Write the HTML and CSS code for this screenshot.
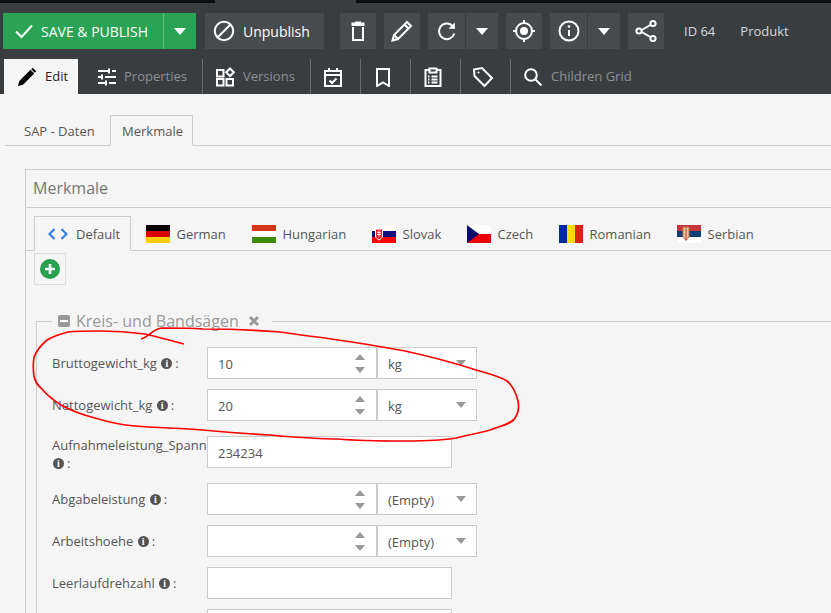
FILE: index.html
```html
<!DOCTYPE html>
<html lang="en">
<head>
<meta charset="utf-8">
<title>Merkmale</title>
<link rel="stylesheet" href="styles.css">
</head>
<body>
<div class="page">
<div class="topstrip"><div class="strip-a"></div><div class="strip-b"></div><div class="strip-c"></div></div>
<header class="toolbar">
  <div class="actions">
    <div class="btn save">
      <span class="save-main">
        <svg class="ic18" viewBox="0 0 18 18"><path d="M1 9.500l5.500 5.500L17 3.500" class="st"/></svg>
        <span>SAVE &amp; PUBLISH</span>
      </span>
      <span class="save-drop"><i class="caret white"></i></span>
    </div>
    <div class="btn unpublish">
      <svg class="ic22" viewBox="0 0 22 22"><circle cx="11" cy="11" r="9.200" class="st"/><path d="M4.500 17.500l13-13" class="st"/></svg>
      <span>Unpublish</span>
    </div>
    <div class="btn square m16">
      <svg class="ic22" viewBox="0 0 22 22"><path d="M4.500 2.500h13v3.500h-13z" class="fw"/><path d="M8 1.500h6v2H8z" class="fw"/><path d="M6 7v13h10V7" class="st"/></svg>
    </div>
    <div class="btn square m8">
      <svg class="ic24" viewBox="0 0 24 24"><path d="M2.500 21.500l1.500-5.500L17 3l4 4L8 20z" class="st"/><path d="M14.500 5.500l4 4M4 16l4 4" class="st"/></svg>
    </div>
    <div class="btn square m8 w37">
      <svg class="ic22" viewBox="0 0 22 22"><path d="M18.300 13.500A7.800 7.800 0 1 1 16 5.500L18.500 8" class="st"/><path d="M18.800 2.500V8.800H12.500" class="fillw"/></svg>
    </div>
    <div class="btn drop m1"><i class="caret white"></i></div>
    <div class="btn square m8">
      <svg class="ic24" viewBox="0 0 24 24"><circle cx="12" cy="12" r="8" class="st"/><circle cx="12" cy="12" r="4" class="fw"/><path d="M12 1v3.500M12 19.500V23M1 12h3.500M19.500 12H23" class="st"/></svg>
    </div>
    <div class="btn square m8 w37">
      <svg class="ic22" viewBox="0 0 22 22"><circle cx="11" cy="11" r="9.500" class="st"/><path d="M11 10v6" class="st"/><circle cx="11" cy="6.500" r="1.300" class="fw"/></svg>
    </div>
    <div class="btn drop m1"><i class="caret white"></i></div>
    <div class="btn square m8">
      <svg class="ic24" viewBox="0 0 24 24"><path d="M6 12l12-7M6 12l12 7" class="st"/><circle cx="5" cy="12" r="2.600" class="node"/><circle cx="19" cy="4.500" r="2.600" class="node"/><circle cx="19" cy="19.500" r="2.600" class="node"/></svg>
    </div>
    <span class="meta id">ID 64</span>
    <span class="meta produkt">Produkt</span>
  </div>
  <nav class="maintabs">
    <div class="mtab active edit">
      <svg class="ic20" viewBox="0 0 20 20"><path d="M1 19l1.300-5L13.500 2.800l3.700 3.700L6 17.700z" class="black"/><path d="M15 1.500l3.500 3.500" class="st-black"/></svg>
      <span>Edit</span>
    </div>
    <div class="mtab props">
      <svg class="ic20" viewBox="0 0 20 20"><path d="M1 4h10M15 4h4M1 10h3M8 10h11M1 16h7M12 16h7M12 1.500v5M5 7.500v5M9 13.500v5" class="st"/></svg>
      <span>Properties</span>
    </div>
    <div class="mtab sep versions">
      <svg class="ic20" viewBox="0 0 20 20"><path d="M2 3h6.500v6.500H2zM2 12h6.500v6.500H2zM11.500 12H18v6.500h-6.500zM15 1.500l3.800 3.800-3.800 3.800-3.800-3.800z" class="st"/></svg>
      <span>Versions</span>
    </div>
    <div class="mtab sep w50">
      <svg class="ic20" viewBox="0 0 20 20"><path d="M2 4h16v15H2zM2 8h16M6 1v4M14 1v4M6.500 13.500l2.500 2.500 4.500-4.500" class="st"/></svg>
    </div>
    <div class="mtab sep w50">
      <svg class="ic20" viewBox="0 0 20 20"><path d="M4 2h12v17l-6-3.500L4 19z" class="st"/></svg>
    </div>
    <div class="mtab sep w50">
      <svg class="ic20" viewBox="0 0 20 20"><path d="M6 3H2.500v16h15V3H14M6.500 1.500h7v4h-7zM8.500 9.500h6M8.500 12.500h6M8.500 15.500h6M5 9.500h1.500M5 12.500h1.500M5 15.500h1.500" class="st"/></svg>
    </div>
    <div class="mtab sep w50">
      <svg class="ic22 tag" viewBox="0 0 22 22"><path d="M2 3.500l8-1.500 10 10-7.500 8L2.500 10z" class="st"/><circle cx="6.500" cy="6.500" r="1" class="fw"/></svg>
    </div>
    <div class="mtab sep grid">
      <svg class="ic20" viewBox="0 0 20 20"><circle cx="8" cy="8" r="5.800" class="st"/><path d="M12.500 12.500l6 6" class="st"/></svg>
      <span>Children Grid</span>
    </div>
  </nav>
</header>

<main class="content">
  <div class="subtabs">
    <span class="stab">SAP - Daten</span>
    <span class="stab current">Merkmale</span>
  </div>
  <section class="panel">
    <h2 class="panel-title">Merkmale</h2>
    <div class="langtabs">
      <div class="ltab current">
        <svg class="code" viewBox="0 0 20 12"><path d="M6.500 1L1.500 6l5 5M13.500 1l5 5-5 5"/></svg>
        <span>Default</span>
      </div>
      <div class="ltab w106">
        <svg class="flag" viewBox="0 0 24 18"><rect width="24" height="6" fill="#000"/><rect y="6" width="24" height="6" fill="#d80000"/><rect y="12" width="24" height="6" fill="#ffce00"/></svg>
        <span>German</span>
      </div>
      <div class="ltab w120">
        <svg class="flag" viewBox="0 0 24 18"><rect width="24" height="6" fill="#d53618"/><rect y="6" width="24" height="6" fill="#fff"/><rect y="12" width="24" height="6" fill="#3e8a05"/></svg>
        <span>Hungarian</span>
      </div>
      <div class="ltab w95">
        <svg class="flag" viewBox="0 0 24 18"><rect width="24" height="6" fill="#fff"/><rect y="6" width="24" height="6" fill="#0b0f80"/><rect y="12" width="24" height="6" fill="#f00"/><path d="M3.500 4h7v7c0 2-2 3-3.500 4-1.500-1-3.500-2-3.500-4z" fill="#e8232c" stroke="#fff"/><path d="M7 5.500v6M5.300 7.500h3.400M5 9.500h4" stroke="#fff" fill="none"/></svg>
        <span>Slovak</span>
      </div>
      <div class="ltab w92">
        <svg class="flag" viewBox="0 0 24 18"><rect width="24" height="9" fill="#fff"/><rect y="9" width="24" height="9" fill="#e8000b"/><path d="M0 0l12 9-12 9z" fill="#0a0a6e"/></svg>
        <span>Czech</span>
      </div>
      <div class="ltab w118">
        <svg class="flag" viewBox="0 0 24 18"><rect width="8" height="18" fill="#002b9f"/><rect x="8" width="8" height="18" fill="#ffdc00"/><rect x="16" width="8" height="18" fill="#df2115"/></svg>
        <span>Romanian</span>
      </div>
      <div class="ltab">
        <svg class="flag" viewBox="0 0 24 18"><rect width="24" height="6" fill="#c6363c"/><rect y="6" width="24" height="6" fill="#0c4076"/><rect y="12" width="24" height="6" fill="#fff"/><path d="M6 2h6v10l-3 3.500L6 12z" fill="#e8c9a0" stroke="#b8704a"/><path d="M9 2v13" stroke="#c6363c" fill="none"/></svg>
        <span>Serbian</span>
      </div>
    </div>
    <div class="addbar">
      <span class="addbtn">
        <svg class="ic20" viewBox="0 0 20 20"><circle cx="10" cy="10" r="10" fill="#27a04f"/><path d="M10 5v10M5 10h10" stroke="#fff" stroke-width="2.600" fill="none"/></svg>
      </span>
    </div>
    <div class="fieldset">
      <div class="legend">
        <span class="minus"><i></i></span>
        <span class="legend-text">Kreis- und Bandsägen</span>
        <svg class="close" viewBox="0 0 12 12"><path d="M2 2l8 8M10 2l-8 8"/></svg>
      </div>

      <div class="row">
        <div class="label">Bruttogewicht_kg <i class="info">i</i>:</div>
        <div class="number"><span class="val">10</span><span class="spin"><i class="up"></i><i class="down"></i></span></div>
        <div class="select"><span class="val">kg</span><i class="caret grey"></i></div>
      </div>
      <div class="row">
        <div class="label">Nettogewicht_kg <i class="info">i</i>:</div>
        <div class="number"><span class="val">20</span><span class="spin"><i class="up"></i><i class="down"></i></span></div>
        <div class="select"><span class="val">kg</span><i class="caret grey"></i></div>
      </div>
      <div class="row tall">
        <div class="label two">Aufnahmeleistung_Spann<br><i class="info first">i</i>:</div>
        <div class="text"><span class="val">234234</span></div>
      </div>
      <div class="row">
        <div class="label">Abgabeleistung <i class="info">i</i>:</div>
        <div class="number"><span></span><span class="spin"><i class="up"></i><i class="down"></i></span></div>
        <div class="select"><span class="val">(Empty)</span><i class="caret grey"></i></div>
      </div>
      <div class="row">
        <div class="label">Arbeitshoehe <i class="info">i</i>:</div>
        <div class="number"><span></span><span class="spin"><i class="up"></i><i class="down"></i></span></div>
        <div class="select"><span class="val">(Empty)</span><i class="caret grey"></i></div>
      </div>
      <div class="row">
        <div class="label">Leerlaufdrehzahl <i class="info">i</i>:</div>
        <div class="text"></div>
      </div>
      <div class="row">
        <div class="label"></div>
        <div class="text"></div>
      </div>
    </div>
  </section>
</main>

<svg class="scribble" viewBox="0 0 831 613"><path d="M184 344C165 339 155 336 145 334C130 332 115 331 101 331C88 331 78 331 68 332C60 334 54 336 47 340C41 345 37 350 34 357C33 364 33 370 34 376C35 381 37 385 41 388C46 394 53 400 61 405C72 411 83 415 95 418C108 422 121 425 135 426C158 428 180 428 203 430C226 432 248 434 270 435C293 437 315 439 338 439C360 441 383 441 405 441C422 441 440 441 456 438C468 435 479 433 490 430C500 426 512 424 515 418C519 412 519 406 518 401C516 393 513 386 507 381C497 375 485 373 473 369C451 362 428 356 405 351C383 347 360 343 338 340C318 337 299 335 280 332C255 330 229 329 203 329C189 328 175 328 162 328C156 329 153 331 150 334C147 336 145 338 141 339"/></svg>
</div>
</body>
</html>
```
FILE: styles.css
```css
* { box-sizing: border-box; }
html, body { margin: 0; padding: 0; }
body { font-family: "Open Sans", sans-serif; font-size: 13px; color: #555; background: #f5f5f5; }
.page { position: relative; width: 831px; height: 613px; overflow: hidden; }

.topstrip { display: flex; height: 3px; }
.strip-a { width: 215px; background: #0b0e12; }
.strip-b { width: 141px; background: #3a3d40; }
.strip-c { flex: 1; background: #0b0e12; }

.toolbar { height: 91px; background: #3a3d40; }
.actions { display: flex; align-items: center; height: 36px; padding: 10px 0 0 3px; box-sizing: content-box; }
.btn { display: flex; align-items: center; justify-content: center; height: 36px; background: #484b4e; color: #fff; flex: none; }
.save { width: 193px; background: #2ba354; justify-content: flex-start; font-size: 14px; color: #fff; }
.save-main { display: flex; align-items: center; gap: 8px; width: 160px; padding-left: 12px; white-space: nowrap; }
.save-drop { display: flex; flex: 1; height: 36px; align-items: center; justify-content: center; border-left: 1px solid #5dbb7c; }
.unpublish { width: 119px; margin-left: 9px; font-size: 14px; gap: 8px; justify-content: flex-start; padding-left: 8px; }
.square { width: 36px; }
.w37 { width: 37px; }
.m16 { margin-left: 16px; }
.m8 { margin-left: 8px; }
.m1 { margin-left: 1px; }
.drop { width: 32px; }
.meta { color: #d3d9de; font-size: 13px; }
.id { margin-left: 20px; }
.produkt { margin-left: 25px; }

.ic18 { width: 18px; height: 18px; flex: none; }
.ic20 { width: 20px; height: 20px; flex: none; }
.ic22 { width: 22px; height: 22px; flex: none; }
.ic24 { width: 24px; height: 24px; flex: none; }
.st { fill: none; stroke: #fff; stroke-width: 2; }
.fw, .fillw { fill: #fff; stroke: none; }
.node { fill: #484b4e; stroke: #fff; stroke-width: 2; }
.black { fill: #000; }
.st-black { fill: none; stroke: #000; stroke-width: 2; }
.tag { margin-left: -1px; }

.caret { display: block; width: 0; height: 0; border-left: 6px solid transparent; border-right: 6px solid transparent; border-top: 7px solid #fff; }
.caret.grey { border-left-width: 5.500px; border-right-width: 5.500px; border-top: 6px solid #999; }

.maintabs { display: flex; height: 35px; margin-top: 10px; padding-left: 4px; }
.mtab { display: flex; align-items: center; justify-content: flex-start; gap: 8px; height: 35px; color: #8e9194; font-size: 13px; flex: none; }
.mtab span { margin-bottom: 2px; }
.mtab.sep { border-left: 1px solid #6a6d70; }
.mtab.active { background: #f5f5f5; color: #222; }
.edit { width: 74px; padding-left: 13px; }
.props { width: 124px; padding-left: 19px; gap: 7px; }
.versions { width: 108px; padding-left: 12px; gap: 8px; }
.w50 { width: 50px; padding-left: 12px; }
.grid { padding-left: 12px; gap: 8px; width: 200px; }

.content { padding: 21px 0 0 5px; }
.subtabs { display: flex; height: 31px; border-bottom: 1px solid #ccc; }
.stab { display: flex; align-items: center; height: 31px; font-size: 13px; color: #555; width: 105px; padding-left: 19px; }
.stab.current { width: 83px; padding-left: 11px; background: #f5f5f5; border: 1px solid #ccc; border-bottom-color: #f5f5f5; }

.panel { margin: 23px 0 0 20px; border: 1px solid #ccc; border-right: 0; border-bottom: 0; }
.panel-title { margin: 0; height: 38px; padding-left: 7px; line-height: 37px; font-size: 16px; font-weight: 400; color: #777; border-bottom: 1px solid #ccc; }

.langtabs { display: flex; height: 43px; padding: 8px 0 0 8px; border-bottom: 1px solid #ccc; }
.ltab { display: flex; align-items: center; gap: 6.500px; height: 35px; font-size: 13px; flex: none; padding-left: 15px; color: #555; }
.ltab.current { width: 97px; gap: 8px; padding-left: 13px; background: #f5f5f5; border: 1px solid #ccc; border-bottom-color: #f5f5f5; }
.w106 { width: 106px; }
.w120 { width: 120px; }
.w95 { width: 95px; }
.w92 { width: 92px; }
.w118 { width: 118px; }
.flag { width: 24px; height: 18px; flex: none; }
.code { width: 20px; height: 12px; flex: none; fill: none; stroke: #2a7bf0; stroke-width: 2; }

.addbar { height: 70px; padding: 2px 0 0 8px; }
.addbtn { display: flex; align-items: center; justify-content: center; width: 32px; height: 32px; border: 1px solid #ddd; }

.fieldset { margin-left: 10px; border-left: 1px solid #ccc; border-top: 1px solid #ccc; padding: 0 0 0 15px; }
.legend { display: flex; align-items: center; gap: 6px; width: 220px; height: 26px; margin: -14px 0 0 0; padding-left: 6px; background: #f5f5f5; font-size: 16px; color: #999; white-space: nowrap; }
.minus { display: flex; align-items: center; justify-content: center; width: 12px; height: 12px; border-radius: 2px; background: #999; flex: none; }
.minus i { display: block; width: 8px; height: 2px; background: #fff; }
.close { width: 12px; height: 12px; flex: none; margin-left: 3px; fill: none; stroke: #999; stroke-width: 3; }

.row { display: flex; align-items: center; height: 32px; margin-bottom: 10px; }
.legend + .row { margin-top: 13px; }
.row.tall { height: 37px; margin-bottom: 15px; align-items: flex-end; }
.label { width: 155px; flex: none; font-size: 13px; color: #555; white-space: nowrap; overflow: hidden; }
.label.two { line-height: 18px; align-self: flex-start; padding-top: 5px; height: 42px; }
.info { display: inline-block; overflow: hidden; width: 11px; height: 11px; margin: 0 3px 0 1px; border-radius: 50%; background: #555; color: #fff; font: 700 10px/11px "Liberation Serif", serif; text-align: center; vertical-align: -1px; }
.number, .select, .text { display: flex; align-items: center; height: 32px; background: #fff; border: 1px solid #ccc; font-size: 13px; color: #555; flex: none; padding-left: 10px; }
.val { margin-top: 2px; }
.number { width: 170px; justify-content: space-between; padding-right: 11px; }
.select { width: 100px; justify-content: space-between; padding-right: 10px; }
.text { width: 245px; }
.spin { display: flex; flex-direction: column; gap: 7px; }
.spin i { display: block; width: 0; height: 0; border-left: 5.500px solid transparent; border-right: 5.500px solid transparent; }
.spin .up { border-bottom: 6px solid #999; }
.spin .down { border-top: 6px solid #999; }

.scribble { position: absolute; left: 0; top: 0; width: 831px; height: 613px; fill: none; stroke: #f00; stroke-width: 1.700; pointer-events: none; }
```
